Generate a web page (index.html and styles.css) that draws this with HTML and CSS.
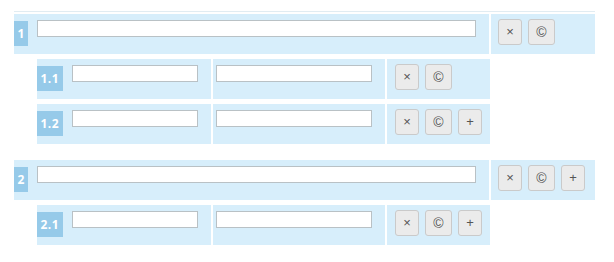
FILE: index.html
```html
<!DOCTYPE html>
<html>
<head>
<meta charset="utf-8">
<link rel="stylesheet" href="styles.css">
</head>
<body>
<div class="list">
  <div class="group">
    <div class="row">
      <div class="cell cell-main"><span class="badge">1</span><input class="field field-wide" type="text"></div>
      <div class="cell cell-actions"><button class="btn">×</button><button class="btn btn-copy">©</button></div>
    </div>
    <div class="children">
      <div class="row">
        <div class="cell cell-a"><span class="badge">1.1</span><input class="field field-a" type="text"></div>
        <div class="cell cell-b"><input class="field field-b" type="text"></div>
        <div class="cell cell-c"><button class="btn">×</button><button class="btn btn-copy">©</button></div>
      </div>
      <div class="row">
        <div class="cell cell-a"><span class="badge">1.2</span><input class="field field-a" type="text"></div>
        <div class="cell cell-b"><input class="field field-b" type="text"></div>
        <div class="cell cell-c"><button class="btn">×</button><button class="btn btn-copy">©</button><button class="btn">+</button></div>
      </div>
    </div>
  </div>
  <div class="group">
    <div class="row">
      <div class="cell cell-main"><span class="badge">2</span><input class="field field-wide" type="text"></div>
      <div class="cell cell-actions"><button class="btn">×</button><button class="btn btn-copy">©</button><button class="btn">+</button></div>
    </div>
    <div class="children">
      <div class="row">
        <div class="cell cell-a"><span class="badge">2.1</span><input class="field field-a" type="text"></div>
        <div class="cell cell-b"><input class="field field-b" type="text"></div>
        <div class="cell cell-c"><button class="btn">×</button><button class="btn btn-copy">©</button><button class="btn">+</button></div>
      </div>
    </div>
  </div>
</div>
</body>
</html>
```
FILE: styles.css
```css
html, body {
  margin: 0;
  padding: 0;
  background: #ffffff;
  font-family: "Open Sans", "Liberation Sans", sans-serif;
}
.list {
  margin: 11px 0 0 14px;
  width: 581px;
  border-top: 1px solid #e1ecf2;
  padding-top: 2px;
  display: flex;
  flex-direction: column;
  gap: 16px;
}
.group {
  display: flex;
  flex-direction: column;
}
.children {
  margin-left: 23px;
  padding-top: 5px;
  display: flex;
  flex-direction: column;
  gap: 5px;
}
.row {
  display: flex;
  gap: 2px;
  height: 40px;
}
.cell {
  background: #d7eefb;
  display: flex;
  align-items: flex-start;
  box-sizing: border-box;
}
.cell-main { width: 475px; }
.cell-actions { width: 104px; padding: 5px 0 0 7px; gap: 6px; }
.cell-a { width: 174px; }
.cell-b { width: 172px; }
.cell-c { width: 103px; padding: 5px 0 0 8px; gap: 6px; }
.badge {
  margin-top: 7px;
  height: 25px;
  line-height: 25px;
  padding: 0 3.5px;
  letter-spacing: 0.5px;
  background: #96cae9;
  color: #ffffff;
  font-weight: 700;
  font-size: 12px;
  text-align: center;
}
.field {
  margin: 6px 0 0 9px;
  height: 17px;
  box-sizing: border-box;
  border: 1px solid #b9c1c5;
  background: #ffffff;
  padding: 0;
  outline: none;
}
.field-wide { width: 439px; }
.field-a { width: 126px; }
.field-b { width: 156px; margin-left: 3px; }
.btn {
  width: 24px;
  height: 26px;
  padding: 0;
  box-sizing: border-box;
  border: 1px solid #cacaca;
  border-radius: 3px;
  background: #ebebeb;
  color: #555555;
  font-family: "Liberation Sans", sans-serif;
  font-size: 13px;
  line-height: 24px;
  text-align: center;
}
.btn-copy { width: 27px; font-size: 14px; }
```
